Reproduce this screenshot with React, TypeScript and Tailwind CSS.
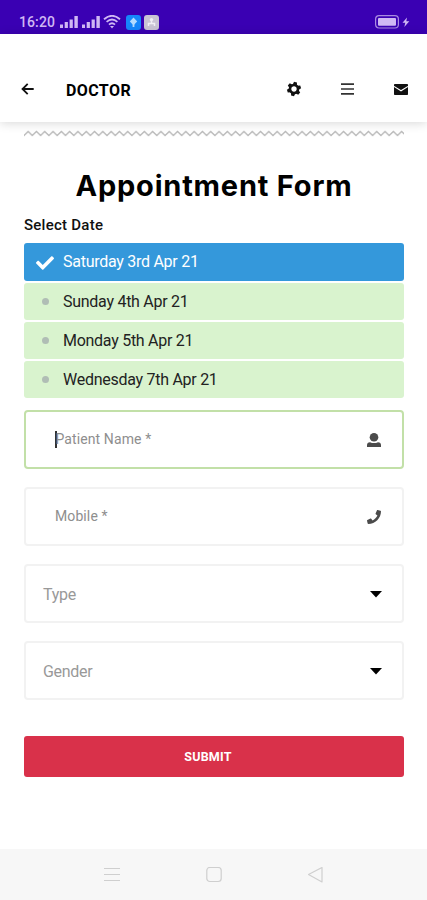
import type { ReactNode } from "react";
import { FaCheck, FaPhone } from "react-icons/fa";

const dates = [
  "Saturday 3rd Apr 21",
  "Sunday 4th Apr 21",
  "Monday 5th Apr 21",
  "Wednesday 7th Apr 21",
];

const teeth = [0, 60, 120, 180, 240, 300];

function Signal() {
  return (
    <svg viewBox="0 0 18 12" className="h-3 w-[18px]" fill="currentColor">
      <rect x="0" y="8.5" width="3" height="3.5" />
      <rect x="4.7" y="6" width="3.2" height="6" />
      <rect x="9.6" y="3.5" width="3.2" height="8.5" />
      <rect x="14.4" y="0" width="3.4" height="12" />
    </svg>
  );
}

function StatusBar() {
  return (
    <div className="flex h-[34px] items-start bg-[#3a00b3] pt-[15px] pr-4 pl-[19px] text-[#d0b8f4]">
      <span className="w-[41px] text-[14px] leading-[15px] font-medium tracking-[0.1px]">16:20</span>
      <div className="flex gap-[4px] pt-[1px]">
        <Signal />
        <Signal />
      </div>
      <svg viewBox="0 0 18 14" className="ml-[3px] h-[14px] w-[18px]" fill="none" stroke="currentColor" strokeWidth="1.8">
        <path d="M1 4.2Q9-2.6 17 4.2M3.6 6.9Q9 2.2 14.4 6.9M6 9.6Q9 6.8 12 9.6" />
        <path d="M7 11h4l-2 2.6z" fill="currentColor" stroke="none" />
      </svg>
      <svg viewBox="0 0 15 15" className="ml-[5px] size-[15px]">
        <rect width="15" height="15" rx="3" fill="#1687fb" />
        <path d="M7.5 4v8" stroke="#b4dcff" strokeWidth="1.8" />
        <path d="M7.5 2.6L11.2 6.5 7.5 10.2 3.8 6.5z" fill="#b4dcff" />
      </svg>
      <svg viewBox="0 0 15 15" className="ml-[3px] size-[15px]">
        <rect width="15" height="15" rx="3" fill="#c9c4d4" />
        <path d="M7.5 4v4M4.5 11V8.5h6V11" stroke="#f1eff5" strokeWidth="1.5" fill="none" />
        <circle cx="7.5" cy="4.6" r="1.7" fill="#f1eff5" />
      </svg>
      <svg viewBox="0 0 36 14" className="ml-auto h-[14px] w-9" fill="currentColor">
        <rect x="0.6" y="0.6" width="22.8" height="12.4" rx="3.5" fill="none" stroke="#a98be0" strokeWidth="1.2" />
        <rect x="3" y="3" width="18" height="7.8" rx="1" />
        <path d="M32 2.5l-4.5 5.3h2.8l-1 4.2 5-5.8h-3z" />
      </svg>
    </div>
  );
}

function Header() {
  return (
    <header className="relative flex h-[88px] items-center bg-white pt-[22px] pr-[19px] pl-[21px] text-[#111] shadow-[0_1px_10px_rgba(0,0,0,0.16)]">
      <svg viewBox="0 0 13 12" className="h-3 w-[13px]" fill="none" stroke="currentColor" strokeWidth="1.8">
        <path d="M6.7 0.8L1.5 6l5.2 5.2M1.5 6h11.2" />
      </svg>
      <h1 className="ml-8 pt-[3px] text-[16px] leading-5 font-bold tracking-[0.4px] text-black">DOCTOR</h1>
      <svg viewBox="-8 -8 16 16" className="ml-auto size-4">
        <g fill="currentColor">
          {teeth.map((angle) => (
            <path key={angle} d="M-2.2-4L-1.5-7H1.5L2.2-4z" transform={`rotate(${angle + 12})`} />
          ))}
        </g>
        <circle r="4" fill="#fff" stroke="currentColor" strokeWidth="2.6" />
      </svg>
      <svg viewBox="0 0 13 12" className="ml-[39px] h-3 w-[13px]" stroke="#333" strokeWidth="1.7">
        <path d="M0 1.1h13M0 6h13M0 10.9h13" />
      </svg>
      <svg viewBox="0 0 14 11" className="ml-10 h-[11px] w-[14px]">
        <rect width="14" height="11" rx="0.8" fill="currentColor" />
        <path d="M0 2.4L7 6.8l7-4.4" fill="none" stroke="#fff" strokeWidth="1.2" />
      </svg>
    </header>
  );
}

function Zigzag() {
  return (
    <svg className="h-[7px] w-full" fill="none" stroke="#bbb" strokeWidth="1.4">
      <defs>
        <pattern id="zigzag" width="8.3" height="7" patternUnits="userSpaceOnUse">
          <path d="M-1 6.6L4.15 1.4l5.15 5.2" />
        </pattern>
      </defs>
      <rect width="380" height="7" fill="url(#zigzag)" stroke="none" />
    </svg>
  );
}

function Field({ label, icon }: { label: string; icon: ReactNode }) {
  const focused = label.startsWith("Patient");
  return (
    <div
      className={`flex h-[59px] items-center justify-between rounded-[4px] border-2 pr-[21px] pl-[29px] text-[14px] tracking-[0.1px] text-[#8e8e8e] ${
        focused ? "border-[#c2e0a8]" : "border-[#f2f2f2]"
      }`}
    >
      <span className="flex items-center">
        {focused && <span className="-mr-px h-[17px] w-[1.5px] bg-[#333]" />}
        <span>{label}</span>
      </span>
      <span className="text-[#4b4b4b]">{icon}</span>
    </div>
  );
}

function Select({ label }: { label: string }) {
  return (
    <div className="flex h-[59px] items-center justify-between rounded-[4px] border-2 border-[#f2f2f2] pr-5 pl-[17px] text-[16px] tracking-[-0.3px] text-[#999]">
      <span className="pt-[2px]">{label}</span>
      <svg viewBox="0 0 12 7" className="mt-px h-[7px] w-3" fill="#000">
        <path d="M0 0h12L6 6.5z" />
      </svg>
    </div>
  );
}

function NavBar() {
  return (
    <nav className="mt-auto flex h-[51px] items-center justify-center gap-[86px] bg-[#f7f7f7] text-[#cfcfcf]">
      <svg viewBox="0 0 16 16" className="size-4" stroke="currentColor" strokeWidth="1.2">
        <path d="M0 1.5h16M0 7.5h16M0 13.5h16" />
      </svg>
      <svg viewBox="0 0 16 16" className="size-4" fill="none" stroke="currentColor" strokeWidth="1.2">
        <rect x="0.8" y="0.5" width="14.4" height="14" rx="3" />
      </svg>
      <svg viewBox="0 0 16 16" className="size-4" fill="none" stroke="currentColor" strokeWidth="1.2">
        <path d="M14 0.5v14.5L0.5 7.5z" strokeLinejoin="round" />
      </svg>
    </nav>
  );
}

export default function App() {
  return (
    <div className="flex h-[900px] w-[427px] flex-col overflow-hidden bg-white font-[Roboto,sans-serif]">
      <StatusBar />
      <Header />
      <main className="flex flex-col pt-2 pr-[23px] pl-6">
        <Zigzag />
        <h2 className="mt-[29px] text-center font-[Inter,sans-serif] text-[29px] leading-10 font-bold tracking-[0.8px] whitespace-nowrap text-black">
          Appointment Form
        </h2>
        <p className="mt-[9px] text-[15px] leading-5 font-medium tracking-[0.25px] text-[#111]">Select Date</p>
        <ul className="mt-2 flex flex-col gap-[2px] text-[16px] tracking-[-0.27px]">
          {dates.map((date, i) => (
            <li
              key={date}
              className={`flex items-center rounded-[3px] ${
                i === 0 ? "h-[38px] bg-[#3498db] text-white" : "h-[37px] bg-[#d9f3ce] text-[#222]"
              }`}
            >
              <span className="flex w-[39px] justify-center pl-[3px]">
                {i === 0 ? (
                  <FaCheck className="mt-[2px] size-[18px]" />
                ) : (
                  <span className="size-[7px] rounded-full bg-[#b0bdb5]" />
                )}
              </span>
              {date}
            </li>
          ))}
        </ul>
        <form className="mt-3 flex flex-col gap-[18px]">
          <Field
            label="Patient Name *"
            icon={
              <svg viewBox="0 0 14 14" className="size-[14px]" fill="currentColor">
                <circle cx="7" cy="4.3" r="4.3" />
                <path d="M0 14v-1.8Q0 9.2 3 9.2Q7 11 11 9.2Q14 9.2 14 12.2V14z" />
              </svg>
            }
          />
          <Field label="Mobile *" icon={<FaPhone className="size-[14px]" />} />
          <Select label="Type" />
          <Select label="Gender" />
          <button
            type="button"
            className="mt-[18px] h-[41px] rounded-[3px] bg-[#d9314a] pt-px pr-3 text-[12.5px] font-bold tracking-[0.2px] text-white"
          >
            SUBMIT
          </button>
        </form>
      </main>
      <NavBar />
    </div>
  );
}
